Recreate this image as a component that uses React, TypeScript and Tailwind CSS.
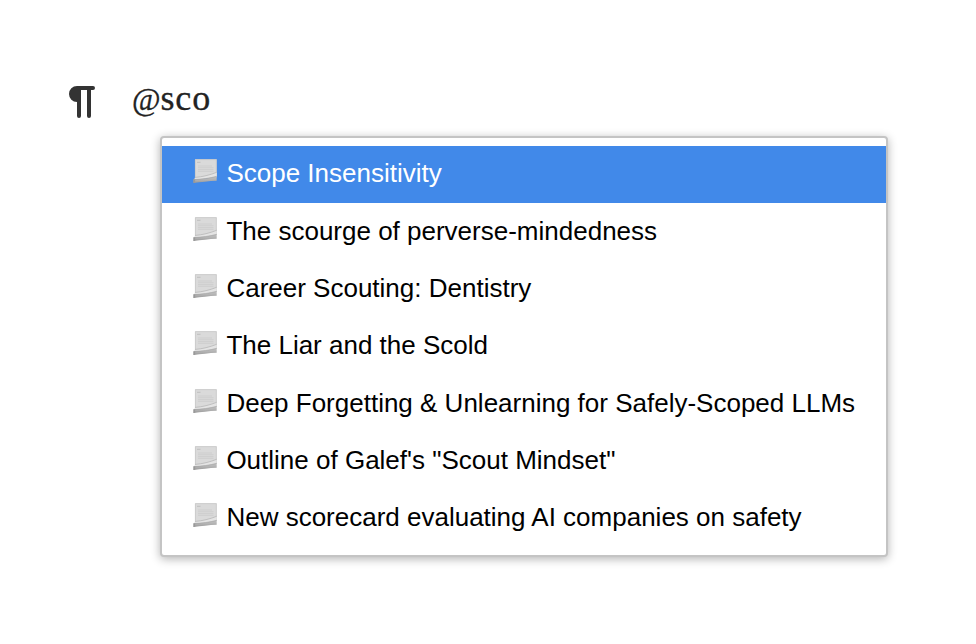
import React from 'react'
import clsx from 'clsx'

const posts = [
  'Scope Insensitivity',
  'The scourge of perverse-mindedness',
  'Career Scouting: Dentistry',
  'The Liar and the Scold',
  'Deep Forgetting & Unlearning for Safely-Scoped LLMs',
  'Outline of Galef\'s "Scout Mindset"',
  'New scorecard evaluating AI companies on safety',
]

const ParagraphIcon = () => (
  <svg className="w-[28px] h-[34px] shrink-0" viewBox="0 0 28 34" fill="#333">
    <path d="M9 1H25a2 2 0 0 1 0 4H23V31a2 2 0 0 1-4 0V5H13V31a2 2 0 0 1-4 0V17A8 8 0 0 1 9 1Z" />
  </svg>
)

const PageIcon = () => (
  <svg className="w-[24px] h-[25px] shrink-0" viewBox="0 0 24 25">
    <defs>
      <linearGradient id="curl" x1="0" y1="0" x2="0" y2="1">
        <stop offset="0" stopColor="#c4c4c4" />
        <stop offset=".55" stopColor="#b2b2b2" />
        <stop offset="1" stopColor="#999" />
      </linearGradient>
    </defs>
    <path d="M2 .2H23.7V18L2 21Z" fill="#dadada" />
    <path d="M2.4 20V.6H23.3V17" stroke="#c8c8c8" strokeWidth=".8" fill="none" />
    <path d="M4 3.3H7.5" stroke="#b8b8b8" strokeWidth=".8" />
    <path d="M5 7H19M5 8.8H20.5M5 10.6H20.5M5 12.4H20.5" stroke="#cdcdcd" strokeWidth=".9" />
    <path d="M2 18.6C9 18.2 17 16.2 23.7 13.3V18L1 21Z" fill="#e4e4e4" />
    <path d="M2 18.4C9 18 17 16 23.7 13.3" stroke="#b2b2b2" strokeWidth=".7" fill="none" />
    <path d="M.6 20.3C8 20.2 17 19 23.7 17.2V21.7C16 22 8 23 .6 24Z" fill="url(#curl)" />
    <path d="M.6 20.6C8 20.4 17 19.1 23.7 17.4" stroke="#a0a0a0" strokeWidth=".6" fill="none" />
    <path d="M.4 20.6H2.2V23.7L.4 24Z" fill="#999" />
  </svg>
)

type Props = {
  title: string
  active: boolean
}

const MentionItem = ({ title, active }: Props) => (
  <li className={clsx('flex items-center h-[57.33px] pl-[31px]', active ? 'bg-[#4189e9] text-white' : 'text-black')}>
    <span className="-mt-[5.5px]"><PageIcon /></span>
    <span className="ml-[9.4px] -mt-[2.5px] whitespace-nowrap">{title}</span>
  </li>
)

const App = () => {
  return (
    <main className="h-[644px] w-[976px] overflow-hidden bg-white">
      <div className="flex items-start h-[136px] pt-[85px] pl-[68px]">
        <ParagraphIcon />
        <p className="flex items-baseline ml-[36px] -mt-[6px] leading-[38px] text-[#222] font-['Liberation_Serif',serif] [-webkit-text-stroke:0.3px_#222]">
          <span className="text-[31px]">@</span>
          <span className="text-[36px] tracking-[0.8px]">sco</span>
        </p>
      </div>
      <ul className="ml-[160px] w-[728px] h-[421px] pt-[8px] rounded-[4px] border-2 border-[#c4c4c4] bg-white shadow-[0_2px_10px_rgba(0,0,0,0.3)] text-[26px] leading-[30px] font-['Liberation_Sans',sans-serif]">
        {posts.map((title, index) => (
          <MentionItem key={title} title={title} active={index === 0} />
        ))}
      </ul>
    </main>
  )
}

export default App
